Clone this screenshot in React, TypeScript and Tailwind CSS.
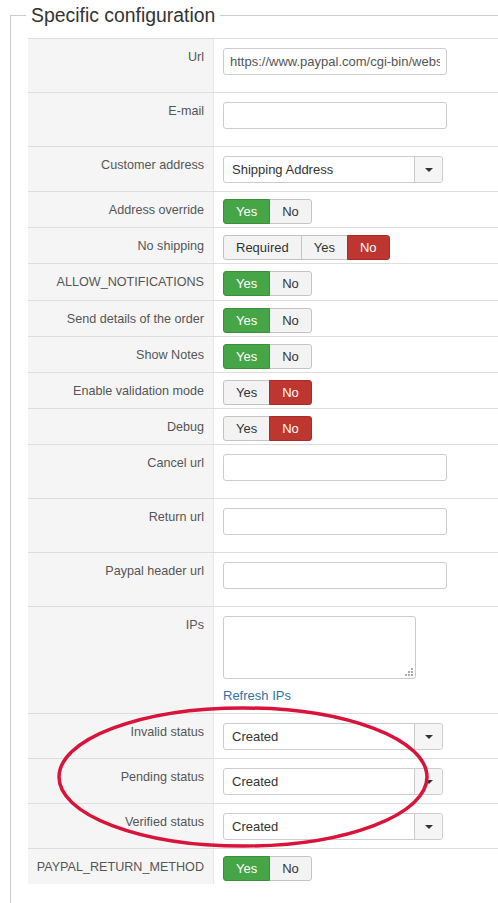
import React from 'react';

type Opt = { text: string; active?: 'yes' | 'no' };

const Toggle = ({ options }: { options: Opt[] }) => (
  <div className="flex h-[25px]">
    {options.map((o, i) => (
      <div
        key={i}
        className={`flex items-center px-3 text-[13px] border ${
          i === 0 ? 'rounded-l-[3px]' : '-ml-px'
        } ${i === options.length - 1 ? 'rounded-r-[3px]' : ''} ${
          o.active === 'yes'
            ? 'bg-[#46a546] border-[#3b8e3b] text-white z-10'
            : o.active === 'no'
            ? 'bg-[#bd362f] border-[#a52e28] text-white z-10'
            : 'bg-[#f3f3f3] border-[#c4c4c4] text-[#333]'
        }`}
      >
        {o.text}
      </div>
    ))}
  </div>
);

const Input = ({ value }: { value?: string }) => (
  <input
    readOnly
    defaultValue={value}
    className="block w-[224px] h-[27px] border border-[#ccc] rounded-[3px] bg-white px-[6px] text-[13px] text-[#555] outline-none"
  />
);

const Select = ({ value }: { value: string }) => (
  <div className="w-[220px] h-[27px] border border-[#ccc] rounded-[3px] bg-white flex text-[13px] text-[#333]">
    <div className="flex-1 flex items-center pl-[8px]">{value}</div>
    <div className="w-[28px] border-l border-[#ccc] bg-[#f5f5f5] rounded-r-[3px] flex items-center justify-center">
      <div className="w-0 h-0 border-l-[4px] border-r-[4px] border-t-[4px] border-l-transparent border-r-transparent border-t-[#333]" />
    </div>
  </div>
);

const yesNo = (v: 'yes' | 'no'): Opt[] => [
  { text: 'Yes', active: v === 'yes' ? 'yes' : undefined },
  { text: 'No', active: v === 'no' ? 'no' : undefined },
];

type Row = { label: string; h: string; pt: string; content: React.ReactNode; last?: boolean };

const rows: Row[] = [
  { label: 'Url', h: 'h-[54px]', pt: 'pt-[9px]', content: <Input value="https://www.paypal.com/cgi-bin/webscr" /> },
  { label: 'E-mail', h: 'h-[54px]', pt: 'pt-[9px]', content: <Input /> },
  { label: 'Customer address', h: 'h-[45px]', pt: 'pt-[9px]', content: <Select value="Shipping Address" /> },
  { label: 'Address override', h: 'h-[36px]', pt: 'pt-[7px]', content: <Toggle options={yesNo('yes')} /> },
  {
    label: 'No shipping',
    h: 'h-[36px]',
    pt: 'pt-[7px]',
    content: <Toggle options={[{ text: 'Required' }, { text: 'Yes' }, { text: 'No', active: 'no' }]} />,
  },
  { label: 'ALLOW_NOTIFICATIONS', h: 'h-[37px]', pt: 'pt-[7px]', content: <Toggle options={yesNo('yes')} /> },
  { label: 'Send details of the order', h: 'h-[36px]', pt: 'pt-[7px]', content: <Toggle options={yesNo('yes')} /> },
  { label: 'Show Notes', h: 'h-[36px]', pt: 'pt-[7px]', content: <Toggle options={yesNo('yes')} /> },
  { label: 'Enable validation mode', h: 'h-[36px]', pt: 'pt-[7px]', content: <Toggle options={yesNo('no')} /> },
  { label: 'Debug', h: 'h-[36px]', pt: 'pt-[7px]', content: <Toggle options={yesNo('no')} /> },
  { label: 'Cancel url', h: 'h-[54px]', pt: 'pt-[9px]', content: <Input /> },
  { label: 'Return url', h: 'h-[54px]', pt: 'pt-[9px]', content: <Input /> },
  { label: 'Paypal header url', h: 'h-[54px]', pt: 'pt-[9px]', content: <Input /> },
  {
    label: 'IPs',
    h: 'h-[107px]',
    pt: 'pt-[9px]',
    content: (
      <div>
        <div className="relative w-[193px] h-[63px] border border-[#ccc] rounded-[3px] bg-white">
          <svg className="absolute right-[2px] bottom-[2px]" width="8" height="8" viewBox="0 0 8 8">
            <rect x="6" y="0" width="2" height="2" fill="#aaa" />
            <rect x="3" y="3" width="2" height="2" fill="#aaa" />
            <rect x="6" y="3" width="2" height="2" fill="#aaa" />
            <rect x="0" y="6" width="2" height="2" fill="#aaa" />
            <rect x="3" y="6" width="2" height="2" fill="#aaa" />
            <rect x="6" y="6" width="2" height="2" fill="#aaa" />
          </svg>
        </div>
        <div className="mt-[8px] text-[13px] leading-[18px] text-[#3071a9]">Refresh IPs</div>
      </div>
    ),
  },
  { label: 'Invalid status', h: 'h-[45px]', pt: 'pt-[9px]', content: <Select value="Created" /> },
  { label: 'Pending status', h: 'h-[45px]', pt: 'pt-[9px]', content: <Select value="Created" /> },
  { label: 'Verified status', h: 'h-[45px]', pt: 'pt-[9px]', content: <Select value="Created" /> },
  { label: 'PAYPAL_RETURN_METHOD', h: 'h-[35px]', pt: 'pt-[7px]', content: <Toggle options={yesNo('yes')} />, last: true },
];

export default function App() {
  return (
    <div
      className="relative w-[498px] h-[903px] overflow-hidden bg-white"
      style={{ fontFamily: '"Liberation Sans", Arial, sans-serif' }}
    >
      <fieldset className="mt-[3px] ml-[10px] w-[540px] h-[920px] border border-[#ccc]">
        <legend className="ml-[15px] px-[5px] text-[19.4px] leading-[24px] text-[#333]">
          Specific configuration
        </legend>
        <div className="mt-[11px] ml-[17px] border-t border-[#ddd]">
          {rows.map((r) => (
            <div key={r.label} className={`flex ${r.h} ${r.last ? '' : 'border-b border-[#ddd]'}`}>
              <div className="w-[186px] shrink-0 bg-[#f5f5f5] border-r border-[#e8e8e8] pr-[9px] pt-[9px] text-right text-[12.6px] leading-[18px] text-[#555]">
                {r.label}
              </div>
              <div className={`flex-1 pl-[9px] ${r.pt}`}>{r.content}</div>
            </div>
          ))}
        </div>
      </fieldset>
      <svg className="absolute left-0 top-0 pointer-events-none" width="498" height="903">
        <ellipse cx="243" cy="777" rx="184" ry="69" fill="none" stroke="#d8143a" strokeWidth="3.5" />
      </svg>
    </div>
  );
}
